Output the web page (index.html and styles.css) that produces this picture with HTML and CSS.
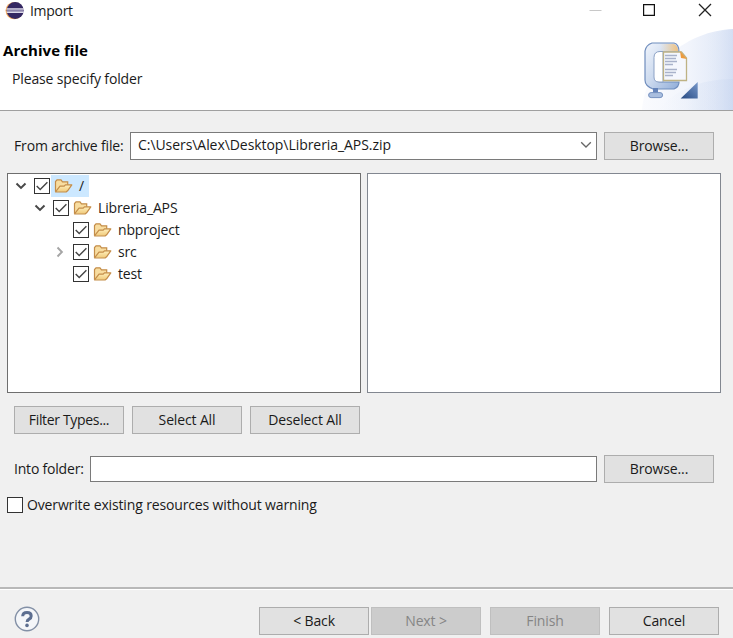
FILE: index.html
```html
<!DOCTYPE html>
<html lang="en">
<head>
<meta charset="utf-8">
<title>Import</title>
<link rel="stylesheet" href="styles.css">
</head>
<body>
<svg class="defs" width="0" height="0">
  <defs>
    <linearGradient id="folderFill" x1="0" y1="0" x2="0" y2="1"><stop offset="0" stop-color="#fff0bd"/><stop offset="1" stop-color="#efc878"/></linearGradient>
    <symbol id="folder" viewBox="0 0 19 16">
      <path d="M1.5 13.5V3.5L3 1.8h4l1.5 2h5.2v3.4" fill="#f8dda0" stroke="#c48d49" stroke-width="1.2"/>
      <path d="M1.5 13.8 6 8.2h4.2l1.2-1.4h6.4l-4.2 6-1.5 1.2Z" fill="url(#folderFill)" stroke="#c48d49" stroke-width="1.2" stroke-linejoin="round"/>
    </symbol>
    <symbol id="check" viewBox="0 0 14 14"><path d="m1.7 6.9 3.5 3.6 7.2-7.3" fill="none" stroke="#444" stroke-width="1.4"/></symbol>
    <symbol id="open" viewBox="0 0 12 8"><path d="m1.5 1.5 4.5 4.4 4.5-4.4" fill="none" stroke="#484848" stroke-width="2"/></symbol>
    <symbol id="closed" viewBox="0 0 8 12"><path d="m1.5 1.5 4.4 4.5-4.4 4.5" fill="none" stroke="#a5a5a5" stroke-width="1.9"/></symbol>
  </defs>
</svg>
<div class="dialog">
  <header class="header">
    <div class="titlebar">
      <svg class="logo" viewBox="0 0 20 20" width="20" height="20">
        <circle cx="9.2" cy="9.6" r="8.7" fill="#f5a95a"/>
        <circle cx="10.2" cy="9.6" r="8.5" fill="#342762"/>
        <path d="M1.8 8h17M1.8 11.2h17" stroke="#dedbea" stroke-width="1.7"/>
        <path d="M1.8 9.6h17" stroke="#8c84ab" stroke-width="1.4"/>
      </svg>
      <span class="title">Import</span>
      <svg class="controls" width="126" height="14" viewBox="0 0 126 14">
        <path d="M.5 7.5h12" stroke="#c8c8c8"/>
        <path d="M54.6 1.6h10.8v10.8H54.6z" fill="none" stroke="#111" stroke-width="1.2"/>
        <path d="m110 1 12 12m0-12-12 12" stroke="#222" stroke-width="1.3"/>
      </svg>
    </div>
    <h1>Archive file</h1>
    <p>Please specify folder</p>
    <svg class="banner" width="95" height="86" viewBox="638 24 95 86">
      <defs>
        <linearGradient id="b1" x1="0" x2="1"><stop offset="0" stop-color="#fafbfe"/><stop offset=".5" stop-color="#f2f5fc"/><stop offset="1" stop-color="#dce5f6"/></linearGradient>
        <linearGradient id="b2" x1="0" x2="1"><stop offset="0" stop-color="#eef3fb" stop-opacity="0"/><stop offset="1" stop-color="#cbd8f1"/></linearGradient>
        <linearGradient id="clamp" x1="0" y1="0" x2="1" y2="1"><stop offset="0" stop-color="#f1f5fc"/><stop offset=".5" stop-color="#cbd9ee"/><stop offset="1" stop-color="#8facd8"/></linearGradient>
        <linearGradient id="glow" x1="0" x2="1"><stop offset="0" stop-color="#f4d5a1" stop-opacity="0"/><stop offset="1" stop-color="#f2c17d"/></linearGradient>
        <linearGradient id="tri" x1="0" y1="1" x2="1" y2="0"><stop offset="0" stop-color="#254982"/><stop offset="1" stop-color="#7898ca"/></linearGradient>
      </defs>
      <path d="M642 110C645 65 687 31 733 29V110Z" fill="url(#b1)"/>
      <path d="M657 110C674 91 700 79 733 79V110Z" fill="url(#b2)" opacity=".65"/>
      <path d="M701 38Q717 31 733 29V110H701Z" fill="url(#b2)" opacity=".5"/>
      <path d="M652 43h22q5 1 5 9h-18q-5 0-5 5v20q0 5 5 5h18q0 5-5 7h-21q-8-3-8-9V51q1-6 7-8Z" fill="url(#clamp)" stroke="#6f8dbd" stroke-width="1.2"/>
      <path d="M660 44h14q4 2 4 7h-17Z" fill="url(#glow)"/>
      <path d="M663 51.5h-3q-6 0-6 6V77q0 5 5 5h4Z" fill="#fff" stroke="#8da2c5"/>
      <path d="M653 88h5v5h-5z" fill="#6584ba"/><rect x="648.6" y="92.6" width="14" height="5" rx="2.5" fill="#a9bedf" stroke="#7591bf"/>
      <path d="M663.5 52h18l5 6v22.5h-23Z" fill="#f5f7fd" stroke="#beb284" stroke-width="1.3"/>
      <path d="m680 51 7 8-6-1Z" fill="#ec9b3f"/>
      <path d="M665 55.5h12m-12 3h11m-11 3h12m-12 3h8m-8 5h12m-12 3h11m-11 3h8" stroke="#a9b2ca" stroke-width="1.3"/>
      <path d="M697.7 82v16.5h-17Z" fill="url(#tri)"/>
    </svg>
  </header>
  <main class="content">
    <div class="row archive">
      <label>From archive file:</label>
      <div class="field combo"><span class="path">C:\Users\Alex\Desktop\Libreria_APS.zip</span>
        <svg width="12" height="8" viewBox="0 0 12 8"><path d="m1.2 1.3 4.8 4.7 4.8-4.7" fill="none" stroke="#666" stroke-width="1.3"/></svg>
      </div>
      <div class="btn">Browse...</div>
    </div>
    <div class="panels">
      <div class="panel tree">
        <div class="node"><i class="tw"><svg width="12" height="8"><use href="#open"/></svg></i><i class="cb"><svg width="14" height="14"><use href="#check"/></svg></i><span class="sel"><svg width="19" height="16"><use href="#folder"/></svg><span>/</span></span></div>
        <div class="node l1"><i class="tw"><svg width="12" height="8"><use href="#open"/></svg></i><i class="cb"><svg width="14" height="14"><use href="#check"/></svg></i><span class="item"><svg width="19" height="16"><use href="#folder"/></svg><span>Libreria_APS</span></span></div>
        <div class="node l2"><i class="tw"></i><i class="cb"><svg width="14" height="14"><use href="#check"/></svg></i><span class="item"><svg width="19" height="16"><use href="#folder"/></svg><span>nbproject</span></span></div>
        <div class="node l2"><i class="tw"><svg width="8" height="12"><use href="#closed"/></svg></i><i class="cb"><svg width="14" height="14"><use href="#check"/></svg></i><span class="item"><svg width="19" height="16"><use href="#folder"/></svg><span>src</span></span></div>
        <div class="node l2"><i class="tw"></i><i class="cb"><svg width="14" height="14"><use href="#check"/></svg></i><span class="item"><svg width="19" height="16"><use href="#folder"/></svg><span>test</span></span></div>
      </div>
      <div class="panel files"></div>
    </div>
    <div class="row actions">
      <div class="btn filter">Filter Types...</div>
      <div class="btn">Select All</div>
      <div class="btn">Deselect All</div>
    </div>
    <div class="row into">
      <label>Into folder:</label>
      <div class="field"></div>
      <div class="btn">Browse...</div>
    </div>
    <div class="row overwrite"><i class="cb"></i><span>Overwrite existing resources without warning</span></div>
  </main>
  <footer class="footer">
    <svg class="help" width="26" height="26" viewBox="0 0 26 26">
      <circle cx="13" cy="13" r="11.7" fill="#f4f6f9" stroke="#8390a6" stroke-width="1.4"/>
      <path d="M8.7 10.2Q8.8 6.4 13 6.4q4.2 0 4.2 3.5 0 2-2.1 3.2-2 1.1-2 2.9" fill="none" stroke="#5c6e90" stroke-width="3"/><circle cx="13" cy="19.4" r="1.8" fill="#5c6e90"/>
    </svg>
    <div class="btn back">&lt; Back</div>
    <div class="btn off next">Next &gt;</div>
    <div class="btn off finish">Finish</div>
    <div class="btn cancel">Cancel</div>
  </footer>
</div>
</body>
</html>
```
FILE: styles.css
```css
* { box-sizing: border-box; }
body { margin: 0; background: #f0f0f0; color: #1a1a1a; font: 14px/20px "Open Sans", "Noto Sans", sans-serif; letter-spacing: -0.14px; }
svg { display: block; flex: none; }
.defs { position: absolute; }
.dialog { width: 733px; height: 638px; display: flex; flex-direction: column; overflow: hidden; }
.header { position: relative; height: 111px; background: #fff; border-bottom: 1px solid #a0a0a0; }
.titlebar { height: 22px; display: flex; align-items: center; padding-left: 5px; }
.logo { margin-right: 5px; }
.title { letter-spacing: -0.3px; }
.controls { margin-left: auto; margin-right: 18px; margin-bottom: 2px; }
h1 { margin: 18px 0 0 3px; font-size: 15px; line-height: 20px; color: #000; letter-spacing: 0.05px; }
.header p { margin: 9px 0 0 12px; line-height: 20px; }
.banner { position: absolute; right: 0; bottom: 0; z-index: 0; }
.content { height: 476px; padding: 21px 12px 0 7px; }
.row { display: flex; align-items: center; white-space: nowrap; }
.archive { height: 28px; padding-left: 7px; }
label { flex: none; }
.archive label { width: 116px; }
.path { letter-spacing: -0.06px; }
.field { height: 28px; width: 467px; background: #fff; border: 1px solid #7a7a7a; }
.combo { display: flex; align-items: center; justify-content: space-between; padding: 0 4px 2px 7px; }
.btn { width: 110px; height: 28px; flex: none; background: #e1e1e1; border: 1px solid #adadad; display: flex; align-items: center; justify-content: center; white-space: nowrap; }
.field + .btn { margin-left: 7px; }
.panels { display: flex; gap: 6px; margin-top: 13px; }
.panel { width: 354px; height: 220px; background: #fff; border: 1px solid #828790; }
.tree { border-color: #6e6e6e; padding-top: 1px; }
.node { height: 22px; display: flex; align-items: center; padding-left: 7px; }
.l1 { padding-left: 26px; }
.l2 { padding-left: 46px; }
.tw { width: 12px; margin-right: 7px; display: flex; justify-content: center; }
.cb { width: 16px; height: 16px; flex: none; border: 1px solid #333; background: #fff; display: flex; }
.sel, .item { display: flex; align-items: center; height: 22px; margin-left: 1px; padding: 0 5px 0 3px; gap: 6px; }
.sel { background: #cce8ff; }
.actions { margin-top: 13px; padding-left: 7px; gap: 8px; }
.filter { letter-spacing: -0.33px; }
.into { margin-top: 21px; height: 28px; padding-left: 7px; }
.into label { width: 76px; letter-spacing: -0.2px; }
.into .field { width: 507px; height: 26px; }
.overwrite { margin-top: 13px; height: 18px; gap: 4px; }
.footer { height: 51px; border-top: 2px solid #b8b8b8; box-shadow: inset 0 1px #fff; display: flex; align-items: flex-start; padding: 18px 0 0 14px; }
.help { margin-top: -1px; margin-right: 219px; }
.off { background: #ccc; border-color: #bfbfbf; color: #858585; }
.next { margin-left: 2px; }
.finish { margin-left: 9px; }
.cancel { margin-left: 9px; }
```
